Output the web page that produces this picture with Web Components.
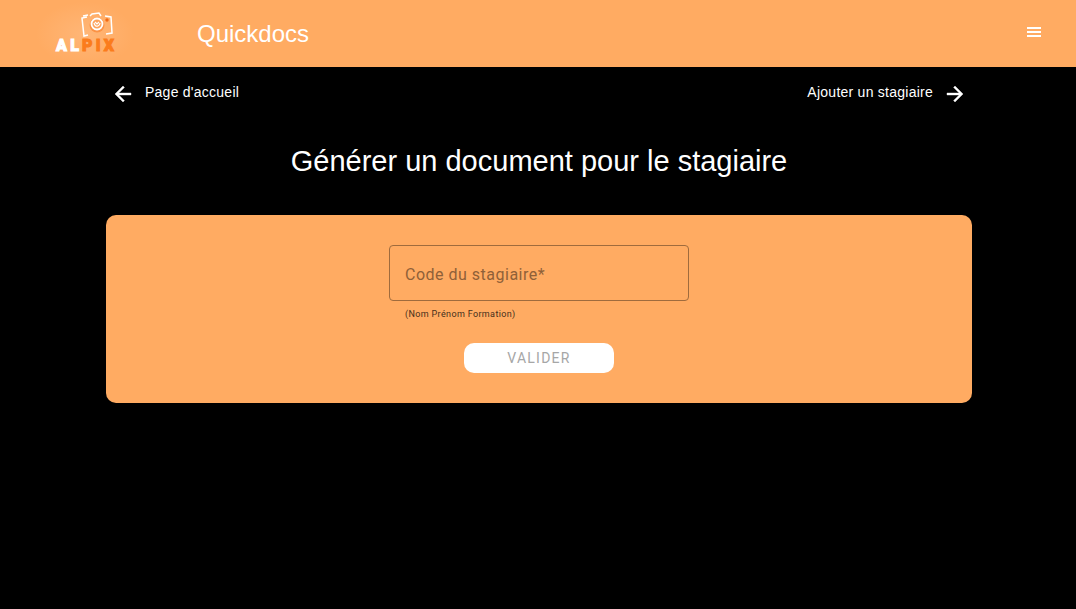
<!DOCTYPE html>
<html lang="fr">
<head>
<meta charset="utf-8">
<meta name="viewport" content="width=device-width, initial-scale=1">
<title>Quickdocs</title>
<style>
  html, body { margin: 0; min-height: 100%; background: #000; }
  body { color: #fff; font-family: "Liberation Sans", Arial, sans-serif; --accent: #ffab62; }
</style>
</head>
<body>
<quick-app></quick-app>

<template id="t-logo">
  <style>
    :host { display: block; }
    a { display: flex; flex-direction: column; align-items: flex-end; width: 58px; padding: 8px 20px 12px; color: #fff; text-decoration: none;
      background: radial-gradient(closest-side, #ffb677, #ffb67700); }
    svg { display: block; width: 34px; height: 28px; }
    .word { display: flex; justify-content: space-between; width: 58px; font: 900 16px/16px Roboto, sans-serif; -webkit-text-stroke: 1px; }
    .hot { color: #fb7c1c; }
  </style>
  <a href="#" aria-label="ALPIX">
    <svg viewBox="0 0 34 28" fill="none" aria-hidden="true">
      <path d="M8 25 4 26 2 8l5-1M3 6l5-1M10 6l2-2 7-1 2 3M25 6l6 1 1 16-6 1" stroke="#fff" stroke-width="1.500"/>
      <circle cx="17" cy="15" r="7.500" fill="#fb9346"/>
      <circle cx="17" cy="14" r="5.500" fill="#fda25c" stroke="#fff" stroke-width="1.800"/>
      <path d="M14 13q1 4 4 3 2-1 2-3M15 12l2 2 2-2" stroke="#fff" stroke-width="1.200"/>
      <circle cx="27" cy="10" r="1.700" fill="#f26a16"/>
    </svg>
    <span class="word"><span>A</span><span>L</span><span class="hot">P</span><span class="hot">I</span><span class="hot">X</span></span>
  </a>
</template>

<template id="t-header">
  <style>
    :host { display: block; background: var(--accent); }
    header { display: flex; align-items: center; height: 67px; padding: 0 30px 0 36px; }
    .title { flex: 1; margin-left: 63px; font-size: 24px; line-height: 32px; }
    button { display: flex; margin-bottom: 4px; padding: 0; border: 0; background: none; color: inherit; cursor: pointer; }
    svg { width: 24px; height: 24px; }
  </style>
  <header>
    <alpix-logo></alpix-logo>
    <span class="title"><slot></slot></span>
    <button type="button" aria-label="Menu"><svg viewBox="0 0 24 24" fill="currentColor"><path d="M5 7h14v2H5zm0 4h14v2H5zm0 4h14v2H5z"/></svg></button>
  </header>
</template>

<template id="t-link">
  <style>
    :host { display: block; }
    a { display: flex; align-items: center; gap: 10px; color: inherit; text-decoration: none; font-size: 14px; line-height: 20px; letter-spacing: 0.0178571em; }
    span { padding-bottom: 4px; }
    svg { width: 24px; height: 24px; }
    :host([forward]) a { flex-direction: row-reverse; }
    :host([forward]) svg { transform: rotate(180deg); }
  </style>
  <a href="#"><svg viewBox="0 0 24 24" fill="currentColor" stroke="currentColor" stroke-width="0.400" aria-hidden="true"><path d="M20 11H7.830l5.590-5.590L12 4l-8 8 8 8 1.410-1.410L7.830 13H20z"/></svg><span><slot></slot></span></a>
</template>

<template id="t-form">
  <style>
    :host { display: block; background: var(--accent); border-radius: 10px; }
    form { display: flex; flex-direction: column; align-items: center; padding: 30px 16px; font-family: Roboto, sans-serif; }
    .field { width: 100%; max-width: 300px; }
    .box { position: relative; }
    input { display: block; box-sizing: border-box; width: 100%; height: 56px; padding: 0 15px; border: 1px solid #9f6b3d; border-radius: 4px; background: none; font: 16px/24px Roboto, sans-serif; color: #000; }
    label { position: absolute; left: 16px; top: 18px; font-size: 16px; line-height: 24px; letter-spacing: 0.03125em; color: #8f6038; pointer-events: none; }
    input:focus + label, input:valid + label { top: 0; font-size: 12px; }
    p { margin: 6px 16px 0; font-size: 9px; line-height: 14px; letter-spacing: 0.04em; color: #452e1a; }
    button { width: 150px; height: 30px; margin-top: 22px; padding: 0; border: 0; border-radius: 10px; background: #fff; color: #a6a6a6; font: 14px/30px Roboto, sans-serif; letter-spacing: 0.0892857em; }
  </style>
  <form>
    <div class="field">
      <div class="box"><input id="code" type="text" required aria-describedby="hint"><label for="code">Code du stagiaire*</label></div>
      <p id="hint">(Nom Prénom Formation)</p>
    </div>
    <button type="submit" disabled>VALIDER</button>
  </form>
</template>

<template id="t-app">
  <style>
    :host { display: block; }
    main { padding: 15px 104px 32px 106px; }
    nav { display: flex; justify-content: space-between; padding: 0 5px; }
    h1 { margin: 35px 0 34px; font-size: 29px; line-height: 40px; font-weight: 400; text-align: center; }
  </style>
  <app-header>Quickdocs</app-header>
  <main>
    <nav><arrow-link>Page d'accueil</arrow-link><arrow-link forward>Ajouter un stagiaire</arrow-link></nav>
    <h1>Générer un document pour le stagiaire</h1>
    <trainee-form></trainee-form>
  </main>
</template>

<script>
  class TemplateElement extends HTMLElement {
    constructor() {
      super();
      this.attachShadow({ mode: "open" }).append(
        document.getElementById(this.constructor.template).content.cloneNode(true));
    }
  }
  class AlpixLogo extends TemplateElement { static template = "t-logo"; }
  class AppHeader extends TemplateElement { static template = "t-header"; }
  class ArrowLink extends TemplateElement { static template = "t-link"; }
  class TraineeForm extends TemplateElement {
    static template = "t-form";
    connectedCallback() {
      const input = this.shadowRoot.querySelector("input");
      const button = this.shadowRoot.querySelector("button");
      input.addEventListener("input", () => { button.disabled = !input.value; });
      this.shadowRoot.querySelector("form").addEventListener("submit", e => e.preventDefault());
    }
  }
  class QuickApp extends TemplateElement { static template = "t-app"; }
  customElements.define("alpix-logo", AlpixLogo);
  customElements.define("app-header", AppHeader);
  customElements.define("arrow-link", ArrowLink);
  customElements.define("trainee-form", TraineeForm);
  customElements.define("quick-app", QuickApp);
</script>
</body>
</html>
